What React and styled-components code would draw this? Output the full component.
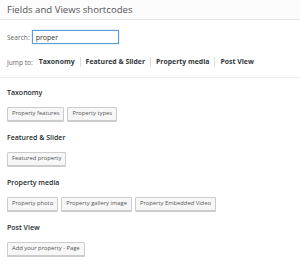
import React from "react";
import styled, { createGlobalStyle } from "styled-components";

const Global = createGlobalStyle`
  html, body { margin: 0; padding: 0; background: #fff; }
  body { font-family: "Open Sans", "Noto Sans", sans-serif; color: #444; }
  * { box-sizing: border-box; }
`;

const Page = styled.div`
  width: 300px;
  height: 266px;
  overflow: hidden;
  background: #fff;
`;

const Header = styled.div`
  height: 20px;
  background: #fcfcfc;
  border-bottom: 1px solid #e5e5e5;
  display: flex;
  align-items: center;
  padding-left: 7px;
`;

const Title = styled.h1`
  margin: 0;
  font-size: 9.6px;
  font-weight: 400;
  color: #555;
  line-height: 1;
`;

const Body = styled.div`
  padding: 10px 7px 0;
`;

const SearchRow = styled.div`
  display: flex;
  align-items: center;
  gap: 2px;
  height: 14px;
`;

const Label = styled.label`
  font-size: 6.6px;
  color: #666;
`;

const Input = styled.div`
  width: 87px;
  height: 14px;
  border: 1px solid #5b9dd9;
  box-shadow: 0 0 1px rgba(30, 140, 190, 0.6);
  font-size: 7px;
  color: #333;
  display: flex;
  align-items: center;
  padding-left: 3px;
`;

const JumpRow = styled.div`
  display: flex;
  align-items: center;
  margin-top: 13px;
  height: 10px;
  font-size: 6.9px;
`;

const JumpLabel = styled.span`
  color: #666;
  margin-right: 6px;
  font-size: 6.6px;
`;

const JumpLink = styled.span`
  font-weight: 700;
  color: #32373c;
  padding: 0 5px;
  border-left: ${(p) => (p.$first ? "none" : "1px solid #ddd")};
  padding-left: ${(p) => (p.$first ? "0" : "5px")};
  line-height: 10px;
`;

const Divider = styled.div`
  height: 1px;
  background: #eee;
  margin: 10px -7px 0;
`;

const Section = styled.div`
  margin-top: ${(p) => p.$top}px;
`;

const Heading = styled.h2`
  margin: 0;
  font-size: 7px;
  font-weight: 600;
  color: #23282d;
  line-height: 10px;
`;

const Buttons = styled.div`
  display: flex;
  gap: 3px;
  margin-top: 9px;
`;

const Button = styled.button`
  height: 14px;
  padding: 0 4px;
  font-family: inherit;
  font-size: 5.8px;
  color: #555;
  background: #f7f7f7;
  border: 1px solid #ccc;
  border-radius: 1px;
  box-shadow: 0 1px 0 #ccc;
  white-space: nowrap;
  line-height: 1;
`;

const sections = [
  { title: "Taxonomy", items: ["Property features", "Property types"], top: 10 },
  { title: "Featured & Slider", items: ["Featured property"], top: 12 },
  { title: "Property media", items: ["Property photo", "Property gallery image", "Property Embedded Video"], top: 12 },
  { title: "Post View", items: ["Add your property - Page"], top: 12 },
];

export default function App() {
  return (
    <Page>
      <Global />
      <Header>
        <Title>Fields and Views shortcodes</Title>
      </Header>
      <Body>
        <SearchRow>
          <Label>Search:</Label>
          <Input>proper</Input>
        </SearchRow>
        <JumpRow>
          <JumpLabel>Jump to:</JumpLabel>
          <JumpLink $first>Taxonomy</JumpLink>
          <JumpLink>Featured &amp; Slider</JumpLink>
          <JumpLink>Property media</JumpLink>
          <JumpLink>Post View</JumpLink>
        </JumpRow>
        <Divider />
        {sections.map((s) => (
          <Section key={s.title} $top={s.top}>
            <Heading>{s.title}</Heading>
            <Buttons>
              {s.items.map((i) => (
                <Button key={i}>{i}</Button>
              ))}
            </Buttons>
          </Section>
        ))}
      </Body>
    </Page>
  );
}
